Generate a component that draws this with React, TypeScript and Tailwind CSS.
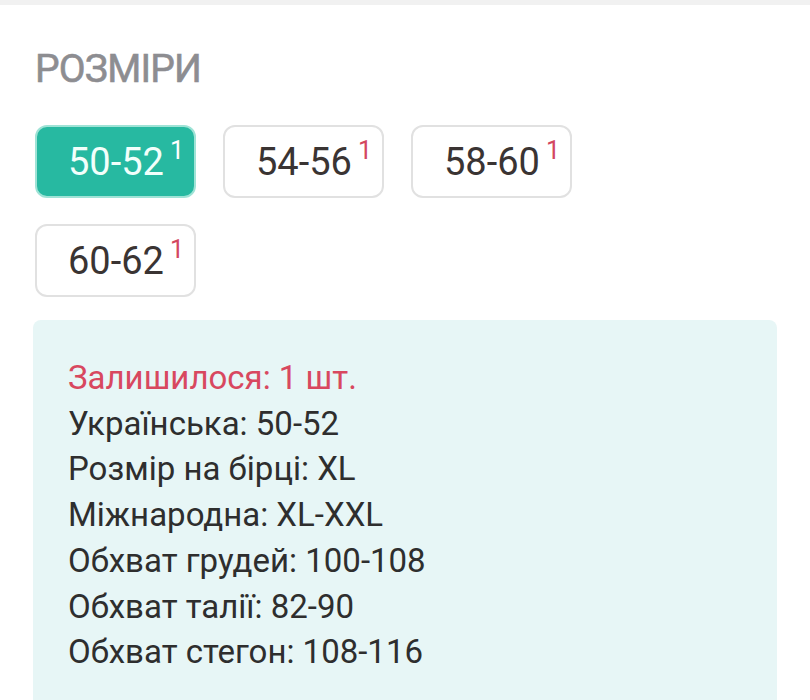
import React from "react";

const sizes = [
  { label: "50-52", count: 1 },
  { label: "54-56", count: 1 },
  { label: "58-60", count: 1 },
  { label: "60-62", count: 1 },
];

const details = [
  "Українська: 50-52",
  "Розмір на бірці: XL",
  "Міжнародна: XL-XXL",
  "Обхват грудей: 100-108",
  "Обхват талії: 82-90",
  "Обхват стегон: 108-116",
];

export default function App() {
  const active = "50-52";
  return (
    <div
      className="h-[700px] w-[810px] overflow-hidden bg-white"
      style={{ fontFamily: "Roboto, 'Noto Sans', sans-serif" }}
    >
      <div className="h-[5px] bg-[#f1f1f1]" />
      <div className="px-[33px] pt-[40px]">
        <h2 className="pl-[2px] text-[39px] font-normal leading-[48px] tracking-[-0.8px] text-[#8d8d91] [-webkit-text-stroke:0.6px_#8d8d91]">
          РОЗМІРИ
        </h2>
        <div className="mt-[32px] flex w-[560px] flex-wrap gap-x-[27px] gap-y-[26px] pl-[2px]">
          {sizes.map((s) => {
            const on = s.label === active;
            return (
              <button
                key={s.label}
                className={
                  on
                    ? "relative flex h-[73px] w-[161px] items-center rounded-[12px] border-2 border-[#9fe3d6] bg-[#27b9a1] pl-[31px] text-left"
                    : "relative flex h-[73px] w-[161px] items-center rounded-[12px] border-2 border-[#e1e1e1] bg-white pl-[31px] text-left"
                }
              >
                <span
                  className={
                    on
                      ? "text-[38px] leading-none text-[#f2fffb]"
                      : "text-[38px] leading-none text-[#3a3433]"
                  }
                >
                  {s.label}
                </span>
                <span
                  className={
                    on
                      ? "absolute right-[10px] top-[11px] text-[25px] leading-none text-white"
                      : "absolute right-[10px] top-[11px] text-[25px] leading-none text-[#d3475f]"
                  }
                >
                  {s.count}
                </span>
              </button>
            );
          })}
        </div>
        <div className="mt-[23px] h-[400px] w-[744px] rounded-[8px] bg-[#e7f6f6] px-[35px] pt-[35px]">
          <p className="text-[33px] leading-[45.7px] text-[#d8485f]">
            Залишилося: 1 шт.
          </p>
          {details.map((d) => (
            <p key={d} className="text-[33px] leading-[45.7px] text-[#2e2e2e]">
              {d}
            </p>
          ))}
        </div>
      </div>
    </div>
  );
}
